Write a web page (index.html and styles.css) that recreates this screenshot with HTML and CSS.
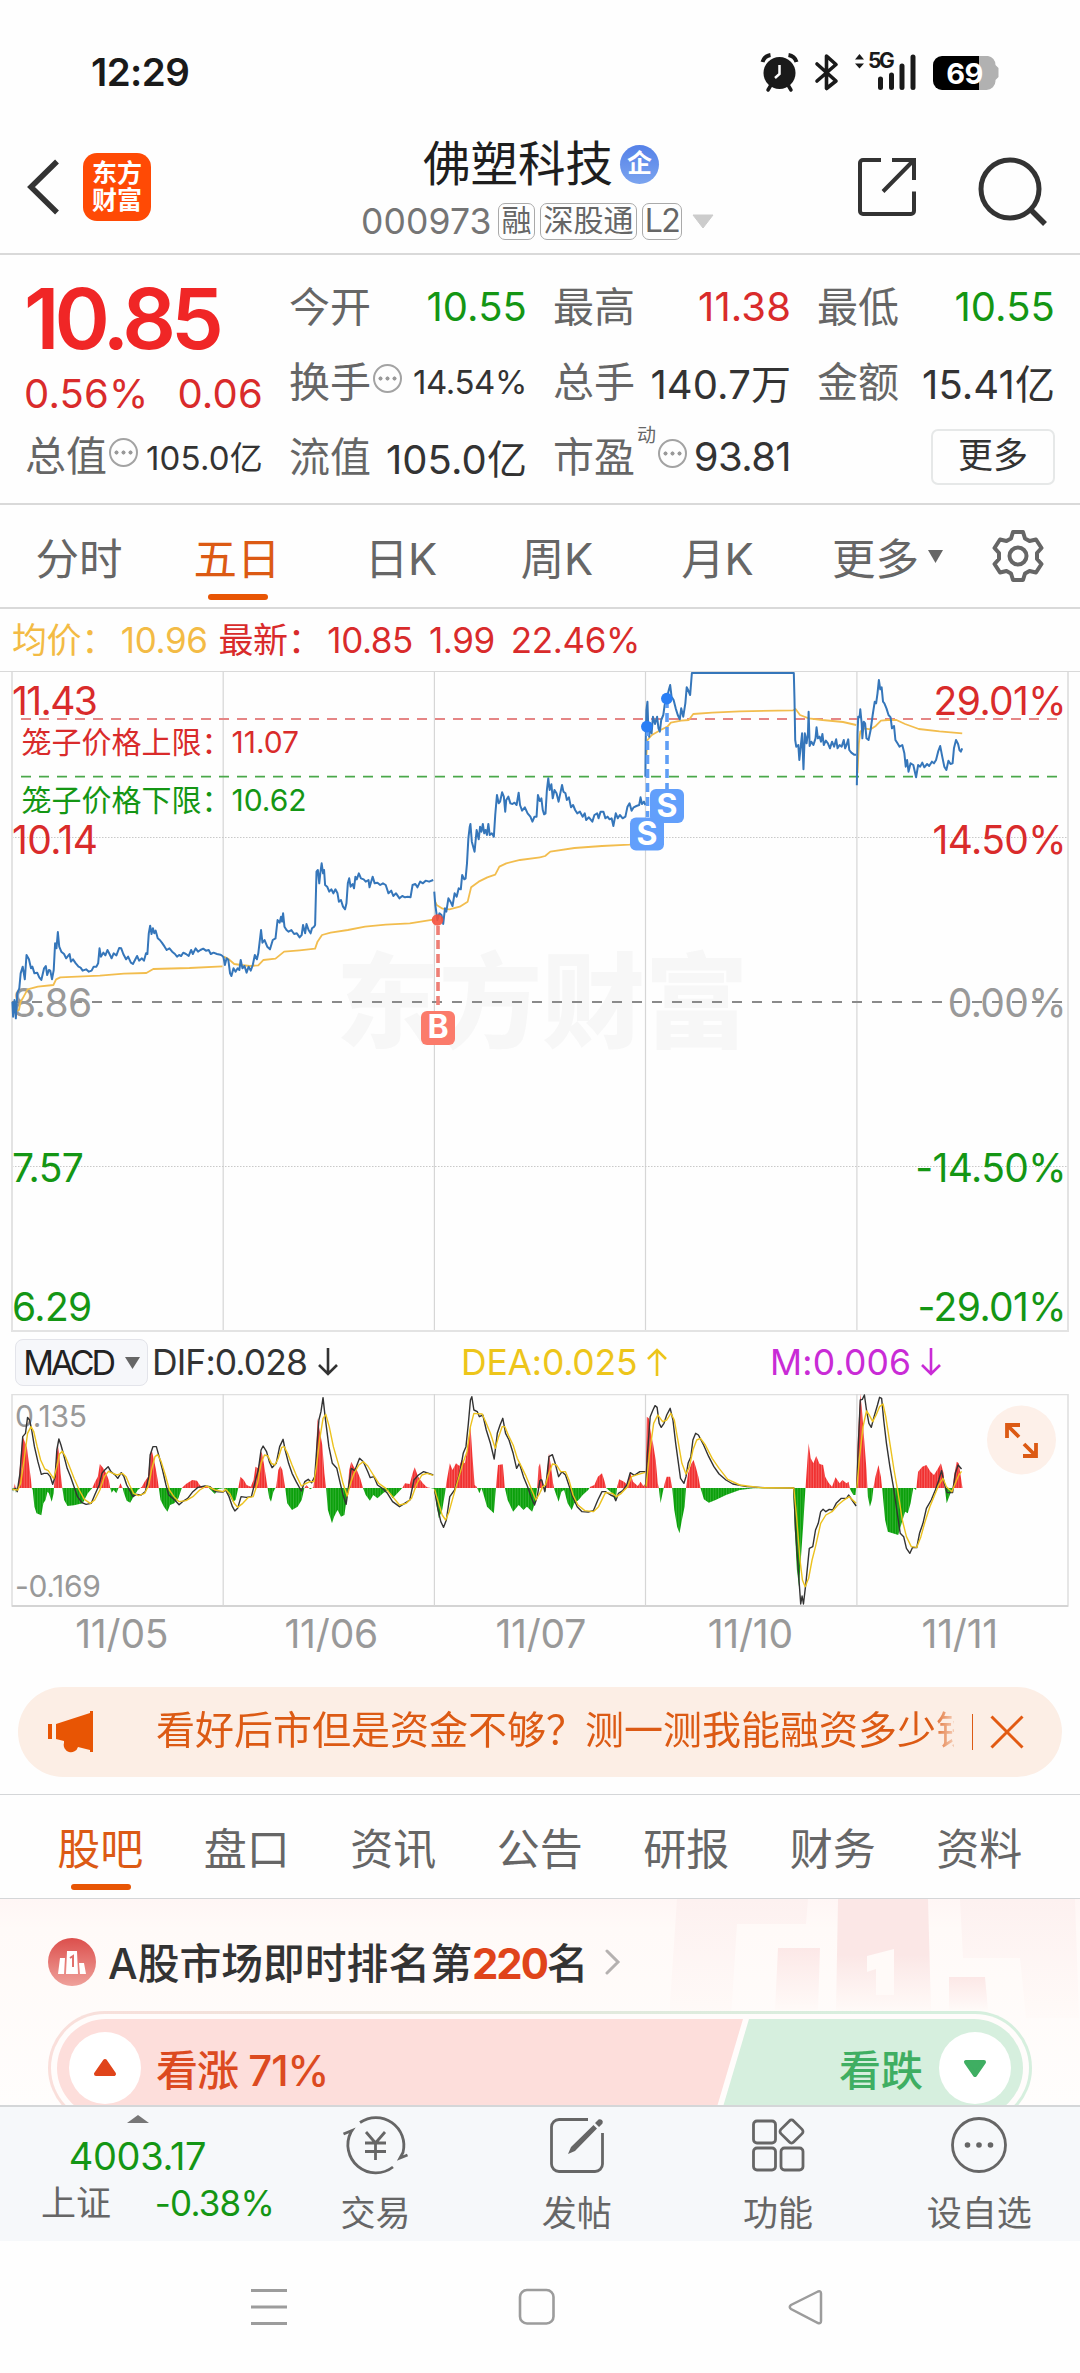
FILE: index.html
```html
<!DOCTYPE html>
<html lang="zh-CN">
<head>
<meta charset="utf-8">
<title>佛塑科技 000973</title>
<link rel="stylesheet" href="styles.css">
</head>
<body>
<div class="statusbar">
  <span class="clock">12:29</span>
  <svg class="status-icons" width="250" height="50" viewBox="750 45 250 50">
    <g fill="#1a1a1a" stroke="#1a1a1a">
      <circle cx="778.5" cy="73" r="16" stroke="none"/>
      <path d="M761.500 62a10 10 0 0 1 8-7M787.500 55a10 10 0 0 1 8 7" fill="none" stroke-width="4"/>
      <path d="M770 85l-3 5M787 85l3 5" stroke-width="3.5" stroke-linecap="round"/>
      <path d="M778.5 65v9l-4.500 4" fill="none" stroke="#fff" stroke-width="2.500"/>
      <path d="M816 64l19 17-9.500 7.500V56l9.500 8.500-19 16.500" fill="none" stroke-width="3.600" stroke-linejoin="round" stroke-linecap="round"/>
      <path d="M854 59.500l4.500-5.500 4.500 5.500zM854 63.500l4.500 5 4.500-5z" stroke="none"/>
      <path d="M879.500 79v8.500M890.500 75v12.500M901 66v21.500M912 57v30.500" stroke-width="5" stroke-linecap="round"/>
    </g>
    <text x="867" y="68" class="net">5G</text>
    <path d="M978 56h9a9 9 0 0 1 7.500 9l3 3v9l-3 3v1a9 9 0 0 1-9 9h-7.500z" fill="#b1b1b1"/>
    <path d="M941 56h37v34h-37a9 9 0 0 1-9-9v-16a9 9 0 0 1 9-9z"/>
    <text x="963.500" y="84" class="batt">69</text>
  </svg>
</div>

<header class="header">
  <div class="header-left">
    <svg width="36" height="60" viewBox="0 0 36 60"><path d="M32 4.500L6 30l26 25.500" fill="none" stroke="#333" stroke-width="5.500"/></svg>
    <div class="logo"><span>东方</span><span>财富</span></div>
  </div>
  <div class="header-mid">
    <div class="title">佛塑科技<span class="badge">企</span></div>
    <div class="sub"><span class="code">000973</span><span class="tag">融</span><span class="tag">深股通</span><span class="tag tag-l2">L2</span>
      <svg width="22" height="15" viewBox="0 0 22 15"><path d="M1 1h20L11 14z" fill="#ccc" stroke="#ccc" stroke-linejoin="round"/></svg></div>
  </div>
  <div class="header-right">
    <svg width="62" height="62" viewBox="0 0 62 62" fill="none" stroke="#333" stroke-width="4"><path d="M25 4H7a3 3 0 0 0-3 3v48a3 3 0 0 0 3 3h48a3 3 0 0 0 3-3V35.500M36 4h22v20M57 5L27 35.500"/></svg>
    <svg width="72" height="72" viewBox="0 0 72 72" fill="none" stroke="#333" stroke-width="5"><circle cx="33" cy="33" r="29"/><path d="M54 54l14 14" stroke-width="5.500"/></svg>
  </div>
</header>

<section class="quote">
  <div class="quote-left">
    <div class="last">10.85</div>
    <div class="chg"><span>0.56%</span><span>0.06</span></div>
    <div class="cell"><label>总值</label><i class="info"></i><b class="sm">105.0亿</b></div>
  </div>
  <div class="quote-grid">
    <div class="cell"><label>今开</label><b class="down">10.55</b></div>
    <div class="cell"><label>最高</label><b class="up">11.38</b></div>
    <div class="cell"><label>最低</label><b class="down">10.55</b></div>
    <div class="cell"><label>换手</label><i class="info"></i><b class="sm">14.54%</b></div>
    <div class="cell"><label>总手</label><b>140.7万</b></div>
    <div class="cell"><label>金额</label><b>15.41亿</b></div>
    <div class="cell"><label>流值</label><b>105.0亿</b></div>
    <div class="cell"><label>市盈</label><sup>动</sup><i class="info"></i><b class="pe">93.81</b></div>
    <div class="cell"><button class="more">更多</button></div>
  </div>
</section>

<nav class="periods">
  <a>分时</a><a class="on">五日</a><a>日K</a><a>周K</a><a>月K</a>
  <a>更多<svg width="15" height="13" viewBox="0 0 15 13"><path d="M0 0h15L7.500 13z" fill="#666"/></svg></a>
  <a><svg width="52" height="54" viewBox="-26 -27 52 54" fill="none" stroke="#666" stroke-width="4"><path stroke-linejoin="round" d="M-5-24H5L7-17.500 11.500-15 18-16.500 23.500-8 19-3V3L23.500 8 18 16.500 11.500 15 7 17.500 5 24H-5L-7 17.500-11.500 15-18 16.500-23.500 8-19 3V-3L-23.500-8-18-16.500-11.500-15-7-17.500z"/><circle r="8.500"/></svg></a>
</nav>

<div class="legend"><span class="avg">均价：<em>10.96</em></span><span>最新：<em>10.85</em></span><span>1.99</span><span>22.46%</span></div>

<svg class="chart" width="1080" height="661" viewBox="0 671 1080 661">
  <text class="watermark" x="336" y="1040">东方财富</text>
  <g stroke="#d6d6d6" stroke-width="1.200"><path d="M223.200 672v659M434.400 672v659M645.500 672v659M856.900 672v659"/></g>
  <g stroke="#c9c9c9" stroke-dasharray="1.500 1.500"><path d="M12 837.500h1056M12 1166.500h1056"/></g>
  <path d="M12 672v659h1056V672" fill="none" stroke="#e3e3e3" stroke-width="2"/>
  <path d="M0 671.500h1080" stroke="#d9d9d9" stroke-width="1.200"/>
  <path d="M21 719h1037" stroke="#e58585" stroke-width="2" stroke-dasharray="10 8"/>
  <path d="M21 776.600h1037" stroke="#4aa84a" stroke-width="1.600" stroke-dasharray="10 8"/>
  <path d="M12 1002h1052" stroke="#8a8a8a" stroke-width="2" stroke-dasharray="10 10"/>
  <g class="price up"><text x="12" y="715" class="tight">11.43</text><text x="12" y="854">10.14</text><text x="1066" y="715" class="end">29.01%</text><text x="1066" y="854" class="end">14.50%</text></g>
  <g class="price flat"><text x="12" y="1017">8.86</text><text x="1066" y="1017" class="end">0.00%</text></g>
  <g class="price down"><text x="12" y="1182">7.57</text><text x="12" y="1320.500">6.29</text><text x="1066" y="1182" class="end">-14.50%</text><text x="1066" y="1320.500" class="end">-29.01%</text></g>
  <g class="cage"><text x="21.500" y="753" class="up">笼子价格上限：11.07</text><text x="21.500" y="811" class="down">笼子价格下限：10.62</text></g>

  <g class="series avgline">
    <g transform="translate(0 600) scale(.34439 .33333)">
      <polyline points="36,1230 45,1235 55,1230 60,1205 66,1195 80,1168 110,1160 155,1155 163,1138 175,1132 290,1127 360,1121 425,1119 445,1107 550,1104 646,1099"/>
      <polyline points="650,1070 665,1078 680,1092 700,1095 725,1098 750,1096 765,1080 800,1076 825,1055 870,1051 915,1046 922,1025 935,1005 960,998 1010,990 1060,980 1120,974 1190,970 1258,959"/>
      <polyline points="1262,900 1268,915 1285,926 1305,928 1335,920 1358,905 1368,862 1390,845 1415,832 1438,824 1450,800 1470,790 1510,780 1568,772"/>
    </g>
    <g transform="translate(540 600) scale(.34439 .33333)">
      <polyline points="0,772 15,768 30,755 100,744 180,738 260,734 300,728"/>
      <polyline points="308,480 312,420 325,405 350,390 370,380 380,368 410,362 432,360 445,342 500,338 580,334 735,331 742,327 755,345 780,355 820,360 880,366 918,375"/>
      <polyline points="922,520 926,430 930,395 940,385 960,388 975,378 990,362 1010,360 1035,360 1060,372 1100,387 1160,394 1226,400"/>
    </g>
  </g>
  <g class="series priceline">
    <g transform="translate(0 600) scale(.34439 .33333)">
      <polyline points="36,1205 38,1250 42,1200 46,1255 50,1180 56,1165 60,1120 66,1100 72,1138 77,1065 84,1078 90,1105 94,1100 100,1120 108,1118 114,1132 120,1140 128,1105 133,1098 137,1125 142,1110 146,1112 151,1138 156,1110 160,1030 164,1045 168,996 172,1040 178,1055 186,1062 192,1075 196,1070 202,1062 206,1085 212,1078 220,1090 228,1100 234,1103 240,1112 250,1108 258,1115 266,1112 272,1100 280,1100 285,1090 289,1045 293,1070 300,1058 306,1066 312,1050 318,1062 324,1075 330,1060 338,1066 346,1044 352,1045 358,1062 366,1078 372,1070 380,1088 386,1092 392,1080 398,1068 404,1082 412,1075 418,1082 424,1060 428,1062 432,1000 436,977 440,1002 444,985 448,1000 452,992 458,1015 464,1020 470,1028 478,1040 484,1050 492,1045 500,1055 508,1062 514,1070 520,1065 526,1068 532,1058 540,1062 548,1068 555,1050 560,1062 568,1045 575,1055 582,1050 590,1046 598,1052 606,1050 612,1062 620,1058 630,1062 640,1064 646,1068 649,1072 653,1095 658,1075 663,1080 668,1120 672,1128 678,1105 684,1115 690,1105 695,1110 699,1080 704,1105 710,1098 716,1118 722,1100 728,1112 734,1095 740,1065 746,1078 750,1060 758,990 762,1028 768,1020 776,1040 784,1048 792,1020 800,1015 806,960 812,968 816,950 819,965 822,940 826,980 832,990 838,995 846,990 854,1002 862,1000 870,1012 876,1005 880,975 886,1000 890,972 896,990 902,1000 906,985 912,980 915,975 919,815 923,810 927,850 930,820 934,790 938,820 941,810 944,855 950,860 956,875 962,868 968,880 974,868 980,880 984,905 990,900 996,920 1002,928 1006,910 1010,850 1014,835 1018,860 1024,852 1028,865 1032,830 1036,838 1042,820 1048,835 1056,838 1062,845 1070,840 1073,862 1082,830 1088,850 1096,848 1104,855 1112,850 1120,855 1128,880 1136,872 1142,888 1150,880 1160,895 1168,888 1176,892 1184,890 1192,892 1198,855 1206,852 1212,862 1220,845 1228,850 1236,842 1246,845 1258,840"/>
      <polyline points="1261,875 1264,915 1270,960 1276,940 1282,945 1287,972 1292,925 1296,935 1302,895 1308,905 1314,918 1320,880 1326,890 1332,865 1338,868 1342,825 1348,838 1352,835 1356,790 1360,715 1364,680 1366,672 1370,725 1378,755 1384,690 1390,718 1394,680 1398,695 1402,672 1406,700 1410,690 1414,705 1418,672 1422,705 1428,700 1434,710 1438,645 1443,585 1448,610 1452,605 1458,577 1463,590 1467,635 1470,600 1476,590 1482,610 1488,612 1494,608 1500,615 1506,578 1510,615 1516,632 1524,622 1532,640 1540,650 1546,665 1552,650 1558,650 1562,585 1568,605"/>
    </g>
    <g transform="translate(540 600) scale(.34439 .33333)">
      <polyline points="0,605 4,595 8,630 12,643 16,640 20,570 24,535 28,570 33,553 37,595 42,570 48,580 54,605 60,575 64,555 68,575 74,580 78,600 84,592 90,622 96,615 102,630 108,640 116,635 124,650 130,640 134,660 142,652 152,665 158,645 166,640 170,655 176,635 184,635 190,655 196,650 202,658 208,655 213,678 220,640 226,655 232,645 240,655 248,650 254,620 260,610 266,632 272,622 280,618 288,615 292,592 296,612 302,605 306,615"/>
      <polyline points="306,530 307,420 309,330 312,305 314,370 317,410 320,370 324,400 328,350 334,372 340,350 344,385 348,395 352,360 358,345 362,315 368,296 374,270 378,255 382,290 388,300 394,325 400,345 406,358 410,325 416,350 422,310 426,262 430,270 436,285 441,219 737,219 739,300 741,420 744,440 750,435 753,480 757,440 761,400 765,508 769,400 774,430 778,400 780,335 783,438 788,425 794,435 800,415 803,382 807,415 812,410 816,425 820,402 824,435 830,422 836,430 842,445 848,425 854,440 860,418 864,445 870,435 876,440 882,420 886,445 890,435 895,418 898,450 904,458 912,464 918,464"/>
      <polyline points="920,556 922,400 924,350 928,352 930,328 934,370 936,415 940,365 944,370 948,415 954,420 960,390 966,345 972,305 976,310 980,280 984,240 988,268 992,262 996,305 1000,310 1006,325 1012,345 1018,352 1022,385 1028,378 1032,420 1038,430 1044,440 1052,435 1058,460 1062,500 1066,480 1070,515 1076,490 1084,495 1092,532 1098,495 1104,500 1110,488 1116,502 1124,492 1130,498 1138,485 1144,490 1150,480 1156,455 1162,438 1168,470 1174,500 1180,510 1186,482 1192,492 1198,490 1202,445 1208,420 1214,432 1218,450 1222,455 1226,445"/>
    </g>
  </g>
  <path d="M438 926v84" stroke="#ee7f76" stroke-width="3.600" stroke-dasharray="9 5"/>
  <path d="M647.500 727v90M667 699v90" stroke="#5f9ef5" stroke-width="3.600" stroke-dasharray="9 5"/>
  <circle cx="437.500" cy="920" r="5.800" fill="#f5503c" opacity=".9"/>
  <circle cx="646.800" cy="726.600" r="5.800" fill="#2a7ff5"/><circle cx="666.800" cy="698.600" r="5.800" fill="#2a7ff5"/>
  <rect x="421" y="1011" width="34" height="34" rx="6" fill="#fb7b6b"/><text class="mark" x="438" y="1038">B</text>
  <rect x="650" y="789" width="34" height="34" rx="6" fill="#629ffb"/><text class="mark" x="667" y="816.500">S</text>
  <rect x="630" y="817.500" width="34" height="33" rx="6" fill="#629ffb"/><text class="mark" x="647" y="844.500">S</text>
</svg>

<div class="indicators">
  <button class="chip"><span>MACD</span><svg width="15" height="12" viewBox="0 0 15 12"><path d="M0 0h15L7.500 12z" fill="#666"/></svg></button>
  <span class="ind dif">DIF:0.028<svg width="22" height="30" viewBox="0 0 22 30"><path d="M11 1v26M2 18l9 9 9-9"/></svg></span>
  <span class="ind dea">DEA:0.025<svg width="22" height="30" viewBox="0 0 22 30"><path d="M11 29V3M2 12l9-9 9 9"/></svg></span>
  <span class="ind m">M:0.006<svg width="22" height="30" viewBox="0 0 22 30"><path d="M11 1v26M2 18l9 9 9-9"/></svg></span>
</div>

<svg class="chart" width="1080" height="213" viewBox="0 1394 1080 213">
  <defs>
    <clipPath id="above"><rect x="0" y="1380" width="1080" height="108"/></clipPath>
    <clipPath id="below"><rect x="0" y="1488" width="1080" height="118"/></clipPath>
    <pattern id="red" width="2.640" height="10" patternUnits="userSpaceOnUse"><rect width="2.640" height="10" fill="#f13030"/><rect width=".9" height="10" fill="#f46464"/></pattern>
    <pattern id="green" width="2.640" height="10" patternUnits="userSpaceOnUse"><rect width="2.640" height="10" fill="#0ba00b"/><rect width=".9" height="10" fill="#35b135"/></pattern>
    <path id="hist" d="M12.400 1488L13.100 1491.700 14.500 1483.300 15.200 1493.300 15.800 1485 17.200 1491.700 18.600 1481.700 20.700 1456.700 22.400 1436 24.800 1441.700 26.900 1447.300 28.900 1463.300 31 1480 31.700 1488 32.700 1490 34.400 1506.700 36.500 1513.300 41.300 1515.300 43.400 1503.300 45.500 1500 47.500 1491.700 48.900 1493.300 51.700 1501.700 53.700 1493.300 55.100 1470 57.900 1445 59.200 1453.300 60.600 1473.300 62.300 1488 64.100 1500 67.500 1506 74 1505.300 82.700 1503.300 87.800 1493.300 92.300 1488 95.100 1481.700 97.800 1476.700 99.900 1464 103.300 1468.300 106.100 1473.300 108.800 1480 110.200 1488 111.600 1492.700 113.600 1490 116.400 1493.300 118.500 1488 120.500 1483.300 122.600 1488 124 1493.300 126.700 1500.700 130.200 1502.700 133.600 1496.700 137.800 1490 141.900 1486.700 144.600 1481.700 148.100 1476.700 149.500 1460 151.500 1449.300 153.600 1458.300 155.700 1468.300 157.700 1480 158.800 1488 160.500 1500 163.900 1506.700 167.400 1511.700 170.100 1505 174.300 1503.300 178.400 1498.300 181.800 1488 186 1484 192.200 1480 197 1480.700 199.700 1485 203.200 1488 206 1486 208.700 1488 214.900 1494 217.700 1489.300 223.900 1488 229.400 1495 232.800 1501.700 235.600 1500 238.300 1488 240.400 1476.700 243.800 1480 246.600 1485 250.700 1486.700 253.500 1480 255.500 1466.700 258.300 1468.300 260.400 1455 261.700 1451.700 263.800 1463.300 265.900 1476.700 267.600 1488 269.300 1498.300 271 1501.700 273.400 1491.700 276.200 1486.700 278.300 1470 280.300 1466 282.400 1470 285.200 1488 287.200 1503.300 292 1510 297.600 1506.700 301.700 1500 304.400 1488 306.500 1485 310 1489.300 313.400 1487.300 315.500 1470 317.500 1418.300 319.600 1430 322.300 1445 324.400 1473.300 326.100 1488 327.900 1510 332 1523.300 334.100 1516.700 337.500 1510 341 1516.700 344.400 1515 346.500 1500 347.800 1488 349.200 1470 351.300 1461.700 354 1467.300 356.800 1470 360.200 1478.300 363 1488 365.700 1495 369.900 1500.700 373.300 1495 377.500 1498.300 383 1493.300 387.800 1490 392.600 1498.300 396.700 1494 402.300 1488 405 1483.300 409.800 1484 412.600 1473.300 414.700 1467.300 418.100 1476.700 422.900 1483.300 427 1487.300 433.900 1488.700 435.300 1496.700 438.800 1518.300 442.200 1510 445 1493.300 446.300 1483.300 449.800 1463.300 452.500 1470 456 1463.300 459.400 1466 461.500 1460 464.900 1463.300 467.700 1446.700 470.400 1425 472.500 1456.700 474.600 1485 476.600 1486.700 479.400 1493.300 481.500 1488 484.200 1496.700 487 1506.700 490.400 1510 493.900 1513.300 495.200 1496.700 496.300 1483.300 498 1465 502.800 1464.300 504.900 1488 507.600 1500 513.100 1511.700 518.700 1505 523.500 1510 526.900 1506.700 532.100 1511.700 535.500 1501.700 537.200 1488 538.600 1466.700 540 1463.300 542.100 1480 544.100 1488 545.500 1491.700 546.900 1473.300 549 1453.300 551 1466.700 553.100 1483.300 554.500 1490 558.600 1501.700 561.400 1491.700 564.100 1490 567.600 1503.300 571.700 1510 574.400 1503.300 578.600 1500 582.700 1495 588.200 1490 590.300 1486.700 594.400 1485 597.900 1476.700 602 1473.300 604.700 1481.700 606.100 1488 612.300 1493.300 615.800 1500 617.100 1486.700 619.200 1479.300 624 1481.700 627.500 1485 630.200 1472.700 633 1481.700 637.800 1486 640.600 1481.700 643.300 1486 645.700 1483.300 646.800 1416.700 648.800 1418.300 650.900 1433.300 653 1443.300 655.700 1460 657.800 1483.300 658.800 1488 660.500 1503.300 662.600 1493.300 664.700 1483.300 666.700 1476.700 670.200 1476.700 672.200 1488 674.300 1510 677.100 1526.700 679.500 1533.300 681.900 1520 684.600 1506.700 686 1488 688.100 1473.300 691.500 1463.300 693.600 1460 695.700 1466.700 698.400 1476.700 700.500 1488 703.900 1499.300 708.800 1502.700 715.600 1500 726 1495 739.700 1490 753.500 1488.300 793.100 1488 794.800 1530 796.900 1570 799 1586.700 801 1556.700 803.100 1526.700 804.500 1503.300 805.500 1488 807.200 1463.300 808.600 1443.300 810.700 1458.300 813.400 1463.300 816.200 1456 819.600 1464 823.100 1465 825.200 1476.700 828.600 1482.700 832 1486.700 835.500 1477.300 839.600 1483.300 842.400 1480 846.500 1483.300 848.600 1481.700 850 1489.300 853.400 1495 855.500 1495 856.200 1488 858.200 1430 860.300 1394 861.700 1406.700 863.700 1433.300 866.500 1470 867.900 1496.700 869.900 1506.700 872 1500 873.400 1488 875.400 1476.700 878.500 1465 880.900 1476.700 882.300 1490 885.100 1520 887.800 1531.700 892.700 1533.300 898.200 1535 901.600 1523.300 905.100 1511.700 907.800 1513.300 910.600 1503.300 913.300 1488 916.100 1490 918.100 1471.700 922.300 1466.700 926.400 1465 930.500 1471.700 934 1475 938.100 1468.300 940.900 1463.300 943.600 1473.300 944.700 1488 946.700 1503.300 949.800 1495 952.600 1488 953.900 1476.700 956.700 1461.700 958.800 1463.300 960.800 1476.700 962.500 1488z"/>
  </defs>
  <path d="M12 1394.500h1056v211.500H12z" fill="none" stroke="#e0e0e0" stroke-width="1.600"/>
  <path d="M12 1606h1056" stroke="#d4d4d4" stroke-width="2"/>
  <path d="M223.200 1394v212M434.400 1394v212M645.500 1394v212M856.900 1394v212" stroke="#d6d6d6" stroke-width="1.200"/>
  <g class="macd-label"><text x="15" y="1426.500">0.135</text><text x="15" y="1596.500">-0.169</text></g>
  <use href="#hist" fill="url(#red)" clip-path="url(#above)"/>
  <use href="#hist" fill="url(#green)" clip-path="url(#below)"/>
  <g class="series difline">
    <g transform="translate(0 1330) scale(.34439 .33333)">
      <polyline points="36,480 45,475 50,485 58,430 66,320 74,310 80,262 86,270 92,300 100,350 110,395 120,433 128,430 138,430 146,440 153,463 160,440 165,360 171,327 177,345 185,375 195,415 205,440 215,470 225,500 238,518 250,523 265,520 275,495 288,465 296,430 304,420 314,410 322,425 335,436 342,445 352,428 360,440 368,465 376,480 386,500 396,493 410,495 422,485 432,440 436,375 444,350 454,350 462,380 472,420 482,465 490,495 502,505 512,515 520,524 530,515 545,505 560,485 575,472 595,468 610,470 625,485 648,486 655,480 665,500 675,530 682,543 690,535 700,500 715,502 730,500 742,450 750,420 758,360 764,348 774,365 782,395 790,413 802,400 812,350 822,328 828,360 838,400 848,430 860,455 875,483 885,455 895,448 905,458 914,440 920,350 926,270 932,245 938,203 944,260 955,350 965,400 978,415 988,460 996,495 1005,523 1012,470 1020,415 1030,422 1044,385 1055,395 1068,425 1075,443 1086,440 1096,465 1110,475 1125,490 1140,515 1160,530 1175,520 1190,510 1202,450 1215,435 1230,425 1258,435"/>
      <polyline points="1262,480 1270,530 1280,575 1288,592 1296,570 1306,500 1320,480 1335,430 1345,370 1353,350 1360,280 1366,210 1370,200 1376,240 1386,245 1392,260 1402,255 1412,300 1424,340 1435,387 1444,310 1452,285 1460,265 1468,310 1478,330 1490,370 1500,415 1508,400 1520,440 1532,470 1542,500 1552,525 1560,500 1568,450"/>
    </g>
    <g transform="translate(540 1330) scale(.34439 .33333)">
      <polyline points="0,450 5,450 14,485 20,440 26,380 36,374 44,400 54,440 64,425 74,435 82,460 95,500 108,530 122,545 140,546 155,542 168,510 180,485 190,485 205,495 215,500 220,512 228,490 240,482 252,465 262,428 274,436 290,425 306,425"/>
      <polyline points="307,470 312,370 320,260 328,240 334,227 340,232 346,280 352,292 360,280 368,255 378,235 386,270 394,340 402,400 408,445 418,460 424,440 430,400 438,380 444,330 452,310 460,315 475,345 490,380 505,410 520,432 540,450 560,462 600,470 650,473 737,474 742,600 750,720 757,822 761,798 765,822 772,760 782,655 792,650 800,600 808,580 815,545 822,538 830,545 840,538 850,540 860,520 875,505 890,505 896,495 906,510 918,528"/>
      <polyline points="920,474 924,350 930,210 936,208 942,195 948,240 955,280 962,292 970,260 980,225 986,202 992,205 998,270 1006,340 1016,410 1026,470 1036,540 1046,610 1056,620 1064,655 1074,670 1082,652 1094,653 1102,610 1112,580 1122,535 1136,510 1148,480 1158,450 1166,422 1174,460 1182,488 1198,488 1206,430 1214,405 1224,417"/>
    </g>
  </g>
  <g class="series dealine">
    <g transform="translate(0 1330) scale(.34439 .33333)">
      <polyline points="36,478 52,480 60,460 70,390 80,310 90,290 98,305 108,350 118,390 130,417 140,422 156,446 165,410 173,372 181,364 190,380 200,405 215,445 230,480 245,508 262,520 275,510 290,480 303,440 315,424 328,430 340,435 355,430 366,440 376,465 388,490 402,497 420,490 432,465 440,420 450,380 458,374 468,395 480,435 492,480 505,500 520,515 540,512 560,500 580,480 600,468 625,480 648,485 655,478 668,492 680,520 690,532 705,520 720,503 735,500 748,460 758,400 768,375 778,378 788,400 798,405 808,385 818,352 825,350 835,370 848,405 862,440 875,468 885,462 900,455 912,455 920,400 928,330 938,265 946,253 956,290 968,350 982,400 996,460 1008,498 1018,460 1028,430 1042,405 1055,395 1068,408 1084,435 1100,460 1120,475 1140,500 1160,525 1180,520 1195,505 1210,462 1225,435 1240,430 1258,436"/>
      <polyline points="1262,478 1274,520 1284,555 1294,570 1304,545 1316,500 1330,450 1344,400 1356,365 1366,290 1376,250 1400,252 1412,280 1424,310 1438,355 1448,320 1458,290 1466,290 1478,320 1490,345 1502,385 1514,410 1528,440 1542,475 1556,510 1568,488"/>
    </g>
    <g transform="translate(540 1330) scale(.34439 .33333)">
      <polyline points="0,488 8,470 16,465 24,435 36,402 48,405 60,425 74,425 84,450 96,495 110,525 130,542 155,545 170,530 190,488 210,490 222,500 236,490 254,470 266,440 285,433 306,427"/>
      <polyline points="308,470 318,370 330,280 342,255 356,275 368,270 380,250 390,270 402,340 412,400 424,432 434,410 444,360 455,330 466,325 480,345 500,385 520,415 545,448 580,465 640,473 737,474 745,560 755,690 762,750 770,770 780,745 790,690 800,650 815,580 830,555 848,545 865,525 880,512 898,500 908,510 918,520"/>
      <polyline points="920,474 928,380 938,290 948,243 956,255 966,275 976,255 986,230 996,222 1004,260 1016,340 1028,420 1040,490 1052,570 1064,620 1078,650 1094,652 1106,620 1118,575 1132,530 1146,495 1158,465 1170,445 1180,470 1196,485 1206,460 1216,435 1224,424"/>
    </g>
  </g>
  <circle cx="1021.500" cy="1440" r="34.500" fill="#fdf0e9"/>
  <path d="M1020 1425h-13v13M1007 1425l12 12M1023 1456h13v-13M1036 1456l-12-12" fill="none" stroke="#dc5a14" stroke-width="3.800"/>
</svg>
<div class="dates"><span>11/05</span><span>11/06</span><span>11/07</span><span>11/10</span><span>11/11</span></div>

<div class="promo">
  <svg width="46" height="42" viewBox="0 0 46 42" fill="#e85504"><path d="M0 13h4v15H0zM8 13L42 2V0h3v41h-3v-2l-12-3a7 7 0 0 1-14-4v-2l-8-2z"/></svg>
  <p>看好后市但是资金不够？测一测我能融资多少钱</p>
  <i class="bar"></i>
  <svg width="34" height="34" viewBox="0 0 34 34"><path d="M1.500 1.500l31 31M32.500 1.500l-31 31" stroke="#e25a12" stroke-width="3"/></svg>
</div>

<nav class="tabs"><a class="on">股吧</a><a>盘口</a><a>资讯</a><a>公告</a><a>研报</a><a>财务</a><a>资料</a></nav>

<section class="forum">
  <svg class="podium" width="410" height="136" viewBox="670 1899 410 136">
    <defs>
      <linearGradient id="f1" x2="0" y2="1"><stop offset="0" stop-color="#fdf1f0"/><stop offset="1" stop-color="#fffaf8"/></linearGradient>
      <linearGradient id="f2" x2="0" y2="1"><stop offset=".5" stop-color="#fbe7e6"/><stop offset="1" stop-color="#fffaf8"/></linearGradient>
      <linearGradient id="f3" x2="0" y2="1"><stop offset="0" stop-color="#fce8e7"/><stop offset="1" stop-color="#fffaf8"/></linearGradient>
    </defs>
    <path d="M677 1899h131l-2 25h-69l-6 94h-62z" fill="url(#f1)"/>
    <path d="M960 1899h115l4 119h-53l-6-60h-57z" fill="url(#f1)"/>
    <path d="M838 1899h90l3 112h-95z" fill="url(#f2)"/>
    <path d="M778 1948h42l-2 62h-43z" fill="url(#f3)"/><path d="M949 1977h36l3 33h-39z" fill="url(#f3)"/>
    <path d="M867 1956l27-7v46h-18v-26l-9 3z" fill="#fffaf8"/>
  </svg>
  <div class="rank">
    <svg width="48" height="48" viewBox="0 0 48 48"><defs><linearGradient id="rk" x2="0" y2="1"><stop offset="0" stop-color="#dc4f4c"/><stop offset="1" stop-color="#efa19b"/></linearGradient></defs><circle cx="24" cy="24" r="24" fill="url(#rk)"/><path d="M12 20h5l-1 16h-6zM19 13h10l1 23H18zM31 25h5l2 11h-6z" fill="#fff"/><path d="M22 20l3-2v11" fill="none" stroke="#e1706b" stroke-width="2"/></svg>
    <span>A股市场即时排名第<strong>220</strong>名</span>
    <svg width="16" height="26" viewBox="0 0 16 26"><path d="M2 2l11 11L2 24" fill="none" stroke="#b5b1b0" stroke-width="3" stroke-linecap="round"/></svg>
  </div>
  <div class="vote">
    <div class="vote-track">
      <svg class="vote-bg" width="966" height="98" viewBox="0 0 966 98"><path d="M0 0h686l-29 98H0z" fill="#fddedb"/><path d="M692 0h274v98H663z" fill="#d6efde"/></svg>
      <div class="vote-row">
        <span class="knob"><svg width="26" height="20" viewBox="0 0 26 20"><path d="M13 3l9 13H4z" fill="#e0441a" stroke="#e0441a" stroke-width="4" stroke-linejoin="round"/></svg></span>
        <span class="bull">看涨 71%</span><span class="bear">看跌</span>
        <span class="knob"><svg width="26" height="20" viewBox="0 0 26 20"><path d="M13 17L4 4h18z" fill="#3fae62" stroke="#3fae62" stroke-width="4" stroke-linejoin="round"/></svg></span>
      </div>
    </div>
  </div>
</section>

<footer class="dock">
  <div class="index">
    <svg width="22" height="8" viewBox="0 0 22 8"><path d="M11 0l11 8H0z" fill="#777"/></svg>
    <b>4003.17</b>
    <div><span>上证</span><em>-0.38%</em></div>
  </div>
  <a><svg width="68" height="60" viewBox="342 2115 68 60" fill="none" stroke="#666" stroke-width="2.800"><path d="M360 2122.500a28 28 0 0 1 43 30l-3 5.500 7.500-3M393 2167a28 28 0 0 1-42-35l1-1.500-8.500 3.500M366 2132l9.500 11 9.500-11M375.500 2143v17M365 2143h21M365 2151.500h21"/></svg>交易</a>
  <a><svg width="56" height="60" viewBox="549 2115 56 60" fill="none" stroke="#666" stroke-width="2.800"><path d="M588 2119.500h-29a7.500 7.500 0 0 0-7.500 7.500v37a7.500 7.500 0 0 0 7.500 7.500h36a7.500 7.500 0 0 0 7.500-7.500v-31"/><path d="M568 2154l3-7 22.500-22 3.500 3.500-22 22.500zM595 2123l3.500-3.500a3 3 0 0 1 4 4L599 2127z" fill="#666" stroke="none"/></svg>发帖</a>
  <a><svg width="56" height="60" viewBox="750 2115 56 60" fill="none" stroke="#666" stroke-width="2.800"><rect x="753.500" y="2121" width="22" height="22" rx="3.500"/><rect x="753.500" y="2148" width="22" height="22" rx="3.500"/><rect x="781" y="2148" width="22" height="22" rx="3.500"/><rect x="782.500" y="2122.500" width="18" height="18" rx="3" transform="rotate(45 791.500 2131.500)"/></svg>功能</a>
  <a><svg width="60" height="60" viewBox="0 0 60 60"><circle cx="30" cy="30" r="26.500" fill="none" stroke="#666" stroke-width="2.800"/><g fill="#666"><circle cx="18.500" cy="30" r="2.800"/><circle cx="30" cy="30" r="2.800"/><circle cx="41.500" cy="30" r="2.800"/></g></svg>设自选</a>
</footer>
<div class="sysnav">
  <svg width="36" height="38" viewBox="0 0 36 38"><path d="M0 2.500h36M0 19h36M0 35.500h36" stroke="#9c9c9c" stroke-width="3"/></svg>
  <svg width="38" height="38" viewBox="0 0 38 38"><rect x="2" y="2" width="33.500" height="33.500" rx="7" fill="none" stroke="#9c9c9c" stroke-width="2.600"/></svg>
  <svg width="38" height="38" viewBox="0 0 38 38"><path d="M31 3.500L4 17q-2.500 2 0 4L31 35q3 1 3-2V5.500q0-3-3-2z" fill="none" stroke="#9c9c9c" stroke-width="2.500"/></svg>
</div>
</body>
</html>
```
FILE: styles.css
```css
* { box-sizing: border-box; }
body {
  margin: 0;
  width: 1080px;
  background: #fefefe;
  color: #333;
  font-family: Inter, "Noto Sans CJK SC", sans-serif;
  overflow: hidden;
}
svg { display: block; flex: none; }
em, i { font-style: normal; }
button { font: inherit; color: inherit; padding: 0; }

.up { color: #d92b2b; fill: #d92b2b; }
.down { color: #149614; fill: #149614; }
.flat { fill: #999; }

.statusbar {
  height: 140px;
  padding: 45px 79px 0 91px;
  display: flex;
  justify-content: space-between;
}
.clock { font-size: 38.5px; font-weight: 600; line-height: 54px; color: #1a1a1a; letter-spacing: -.6px; }
.net { font-size: 21px; font-weight: 700; fill: #1a1a1a; letter-spacing: -2.5px; }
.batt { font-size: 29px; font-weight: 700; fill: #fff; text-anchor: middle; letter-spacing: -.5px; }

.header {
  height: 115px;
  border-bottom: 2px solid #d9d9d9;
  display: flex;
}
.header-left { display: flex; align-items: center; gap: 22px; width: 361px; padding: 0 0 20px 25px; }
.logo {
  width: 68px; height: 68px; border-radius: 14px; background: #ff4a05; color: #fff;
  display: flex; flex-direction: column; align-items: center; justify-content: center;
  font-size: 25px; line-height: 27px; font-weight: 700;
}
.header-mid { width: 401px; }
.title {
  height: 46px; line-height: 46px; font-size: 47.5px; color: #1e1e1e; margin-top: 1px;
  display: flex; align-items: center; padding-left: 62px; gap: 7px;
}
.badge {
  width: 39px; height: 39px; border-radius: 50%; background: linear-gradient(#5581e8, #7ba4ef); color: #fff;
  font-size: 25px; line-height: 37px; text-align: center; font-weight: 700;
}
.sub { display: flex; align-items: center; margin-top: 16px; height: 37px; color: #666; }
.code { font-size: 35.5px; width: 137px; letter-spacing: .1px; color: #757575; }
.tag {
  height: 37px; line-height: 32px; margin-right: 5px; padding: 0 2.5px; border: 1.5px solid #aaa; border-radius: 7px;
  font-size: 30px; white-space: nowrap;
}
.tag-l2 { font-size: 32px; line-height: 34px; letter-spacing: -1.5px; margin-right: 10px; padding: 0; width: 40px; text-align: center; }
.header-right { flex: 1; display: flex; gap: 59px; padding: 16px 0 0 94px; }

.quote { height: 250px; border-bottom: 2px solid #d9d9d9; padding: 14px 25px 0; display: flex; gap: 26px; }
.quote-left { width: 238px; }
.last { height: 99px; line-height: 99px; font-size: 84px; font-weight: 600; color: #f02626; letter-spacing: -5px; text-indent: -1px; }
.chg { height: 50px; line-height: 51px; font-size: 40px; color: #d92b2b; display: flex; justify-content: space-between; letter-spacing: .2px; text-indent: -1px; }
.quote-grid { flex: 1; display: grid; grid-template-columns: repeat(3, 238px); grid-auto-rows: 75px; column-gap: 26px; }
.cell { height: 75px; display: flex; align-items: center; }
.cell label { font-size: 41px; color: #666; white-space: nowrap; padding-bottom: 6px; }
.cell b { font-weight: 400; font-size: 40px; margin-left: auto; white-space: nowrap; letter-spacing: .1px; }
.cell b.sm { font-size: 33px; letter-spacing: -.4px; }
.quote-left .cell b.sm { letter-spacing: .2px; }
.cell b.pe { letter-spacing: -.6px; }
.cell sup { font-size: 19px; color: #666; align-self: flex-start; line-height: 34px; margin-left: 2px; }
.info {
  width: 29px; height: 29px; border: 2.5px solid #a3a3a3; border-radius: 50%; flex: none; margin: -6px 0 0 2px;
  background: radial-gradient(circle, #999 1.8px, transparent 2.3px) 0 0 / 7px 100% content-box; padding: 0 1.5px;
}
.more { margin-left: auto; width: 124px; height: 56px; background: none; border: 2px solid #e6e8e8; border-radius: 7px; font-size: 35px; padding-bottom: 4px; line-height: 48px; }

.periods { height: 104px; border-bottom: 2px solid #d9d9d9; display: grid; grid-template-columns: 158px 158px 170px 142px 179px 161px 103px; }
.periods a, .tabs a {
  display: flex; align-items: center; justify-content: center; font-size: 43px; color: #666; position: relative; white-space: nowrap;
}
.periods a { padding-bottom: 4px; height: 106px; font-size: 43.5px; }
.periods a svg { margin-left: 9px; }
.periods a:last-child svg { margin: 0 3px 0 0; }
.periods a.on, .tabs a.on { color: #dc5a14; }
.periods a.on::after, .tabs a.on::after {
  content: ""; position: absolute; bottom: 8px; left: 50%; width: 60px; height: 6px; margin-left: -29px; border-radius: 3px; background: #e85504;
}
.periods a.on::after { bottom: 11px; }

.legend { height: 62px; line-height: 63px; font-size: 35px; padding-left: 12px; display: flex; color: #d92b2b; white-space: nowrap; letter-spacing: -.4px; }
.legend span { margin-right: 16px; }
.legend em { margin-left: 5px; }
.legend .avg { color: #f3bb45; margin-right: 11px; }

.chart { display: block; }
.price { font-size: 39px; letter-spacing: -.6px; }
.tight { letter-spacing: -1.6px; }
.end { text-anchor: end; }
.cage { font-size: 30px; }
.watermark { font-size: 103px; font-weight: 900; fill: #f7f7f7; }
.mark { font-size: 32px; font-weight: 700; fill: #fff; text-anchor: middle; }
.series polyline { fill: none; vector-effect: non-scaling-stroke; stroke-linejoin: round; }
.priceline { stroke: #3576ba; stroke-width: 2; }
.avgline { stroke: #f2bd4e; stroke-width: 1.8; }
.difline { stroke: #333; stroke-width: 1.4; }
.dealine { stroke: #ecc21e; stroke-width: 1.4; }

.indicators { height: 62px; display: flex; align-items: flex-start; padding: 7px 0 0 15px; }
.chip {
  width: 133px; height: 47px; border: 1.5px solid #e3e4ea; border-radius: 8px; background: #f6f7fa; color: #222;
  display: flex; align-items: center; justify-content: center; gap: 12px; font-size: 34px; line-height: 44px; letter-spacing: -3.2px; margin-right: 4px;
}
.ind { width: 309px; font-size: 35.5px; line-height: 47px; height: 46px; display: flex; align-items: center; gap: 9px; letter-spacing: -.2px; }
.dif { letter-spacing: -.9px; gap: 10px; }
.ind svg { fill: none; stroke: currentColor; stroke-width: 2.6; }
.dea { color: #edc51a; }
.m { color: #c92bd6; letter-spacing: .2px; }

.macd-label { font-size: 30px; fill: #999; letter-spacing: -.3px; }
.dates { height: 80px; padding: 8px 17px; display: grid; grid-template-columns: repeat(5, 209.5px); text-align: center; font-size: 39px; line-height: 38px; color: #999; letter-spacing: -.2px; }

.promo { margin: 0 18px; height: 90px; border-radius: 45px; background: #fceee5; display: flex; align-items: center; padding: 0 38px 0 30px; color: #dc5a14; }
.promo p {
  margin: 0 0 0 62px; padding-bottom: 4px; width: 801px; font-size: 39px; line-height: 60px; overflow: hidden; white-space: nowrap;
  -webkit-mask-image: linear-gradient(90deg, #000 775px, transparent 805px); mask-image: linear-gradient(90deg, #000 775px, transparent 805px);
}
.bar { width: 1.5px; height: 36px; background: #dc5a14; margin: 0 17px 0 18px; }

.tabs { margin-top: 17px; height: 105px; border: solid #d4d6d8; border-width: 1.5px 0; padding: 0 27px; display: grid; grid-template-columns: repeat(7, 146.5px); }
.tabs a { padding-bottom: 2px; }

.forum { height: 206px; overflow: hidden; background: linear-gradient(#fff6f5, #fffaf8 30px, #fffdfc); position: relative; }
.podium { position: absolute; right: 0; top: 0; }
.rank { position: relative; height: 112px; padding: 14px 0 0 48px; display: flex; align-items: center; font-size: 41.8px; font-weight: 500; white-space: nowrap; }
.rank span { margin: 0 16px 0 12px; padding-bottom: 3px; }
.rank strong { color: #e0441a; font-weight: 700; letter-spacing: -2px; }
.vote {
  position: relative; margin-left: 48px; width: 984px; height: 114px; border-radius: 57px; padding: 5px 6px; border: 3px solid transparent;
  background: linear-gradient(#fffcfb, #fffcfb) padding-box, linear-gradient(90deg, #fadfdb, #d6efde 85%) border-box;
}
.vote-track { height: 98px; border-radius: 49px; overflow: hidden; position: relative; }
.vote-bg { position: absolute; inset: 0; }
.vote-row { position: relative; height: 98px; padding: 0 12px; display: flex; align-items: center; font-size: 42px; font-weight: 500; }
.knob { width: 72px; height: 72px; border-radius: 50%; background: #fff; display: flex; align-items: center; justify-content: center; }
.bull { color: #dc4a20; margin-left: 15px; letter-spacing: -1px; padding-bottom: 2px; }
.bear { color: #3fae62; margin: 0 16px 0 auto; padding-bottom: 2px; }

.dock { height: 136px; background: #f6f8fa; border-top: 2px solid #d4d6d8; display: grid; grid-template-columns: 275px repeat(4, 201.2px); }
.dock a { display: flex; flex-direction: column; align-items: center; padding-top: 8px; font-size: 35px; line-height: 60px; color: #666; gap: 8px; white-space: nowrap; }
.index { display: flex; flex-direction: column; align-items: center; color: #149614; padding-top: 8px; }
.index b { font-size: 38px; font-weight: 400; line-height: 40px; margin-top: 13px; letter-spacing: -.3px; }
.index div { display: flex; align-self: stretch; justify-content: space-between; padding: 0 1px 0 41px; font-size: 35px; line-height: 54px; }
.index span { color: #666; }
.index em { letter-spacing: -.8px; }

.sysnav { height: 132px; display: flex; align-items: center; padding: 0 0 0 251px; gap: 231px; }
```
